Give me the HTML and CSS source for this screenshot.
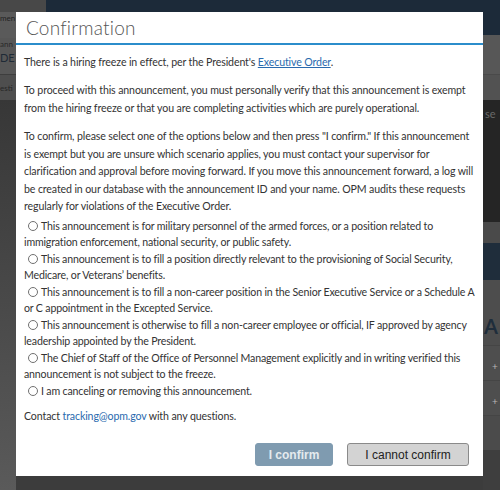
FILE: index.html
```html
<!DOCTYPE html>
<html>
<head>
<meta charset="utf-8">
<link rel="stylesheet" href="styles.css">
</head>
<body>
<div class="page">
  <div class="col-left">
    <div class="lb lb-top"></div>
    <div class="lb lb-1"><span class="lt">men</span></div>
    <div class="lb lb-2"><span class="lt small">ann</span><span class="lt big">DE</span></div>
    <div class="lb lb-3"><span class="lt">esti</span></div>
    <div class="lb lb-rest"></div>
  </div>
  <div class="col-mid">
    <div class="mid-top"><div class="mt-grey"></div><div class="mt-navy"></div></div>
  </div>
  <div class="col-right">
    <div class="rb rb-navy"></div>
    <div class="rb rb-g1"></div>
    <div class="rb rb-g2"></div>
    <div class="rb rb-dark"><span class="rt">se</span></div>
    <div class="rb rb-g3"></div>
    <div class="rb rb-blue"></div>
    <div class="rb rb-a"><span class="ra">A</span></div>
    <div class="rb rb-plus"><span class="rp">+</span></div>
    <div class="rb rb-plus"><span class="rp">+</span></div>
    <div class="rb rb-g4"></div>
    <div class="rb rb-bottom"></div>
  </div>
</div>

<div class="modal">
  <div class="modal-header">
    <h1 class="modal-title">Confirmation</h1>
  </div>
  <div class="modal-body">
    <p class="p1">There is a hiring freeze in effect, per the President's <a class="link-u" href="#">Executive Order</a>.</p>
    <p class="p2">To proceed with this announcement, you must personally verify that this announcement is exempt from the hiring freeze or that you are completing activities which are purely operational.</p>
    <p class="p3">To confirm, please select one of the options below and then press "I confirm." If this announcement is exempt but you are unsure which scenario applies, you must contact your supervisor for clarification and approval before moving forward. If you move this announcement forward, a log will be created in our database with the announcement ID and your name. OPM audits these requests regularly for violations of the Executive Order.</p>
    <div class="options">
      <div class="opt"><input type="radio" name="o" class="radio">This announcement is for military personnel of the armed forces, or a position related to immigration enforcement, national security, or public safety.</div>
      <div class="opt"><input type="radio" name="o" class="radio">This announcement is to fill a position directly relevant to the provisioning of Social Security, Medicare, or Veterans’ benefits.</div>
      <div class="opt"><input type="radio" name="o" class="radio">This announcement is to fill a non-career position in the Senior Executive Service or a Schedule A or C appointment in the Excepted Service.</div>
      <div class="opt"><input type="radio" name="o" class="radio">This announcement is otherwise to fill a non-career employee or official, IF approved by agency leadership appointed by the President.</div>
      <div class="opt"><input type="radio" name="o" class="radio">The Chief of Staff of the Office of Personnel Management explicitly and in writing verified this announcement is not subject to the freeze.</div>
      <div class="opt"><input type="radio" name="o" class="radio">I am canceling or removing this announcement.</div>
    </div>
    <p class="contact">Contact <a class="link" href="#">tracking@opm.gov</a> with any questions.</p>
  </div>
  <div class="modal-footer">
    <button class="btn btn-confirm">I confirm</button>
    <button class="btn btn-cancel">I cannot confirm</button>
  </div>
</div>
</body>
</html>
```
FILE: styles.css
```css
* { box-sizing: border-box; }
html, body { margin: 0; padding: 0; }
body {
  width: 500px;
  height: 490px;
  overflow: hidden;
  position: relative;
  background: #3c3c3c;
  font-family: Lato, "Liberation Sans", sans-serif;
}

/* backdrop page */
.page { display: flex; height: 490px; }
.col-left { width: 16px; display: flex; flex-direction: column; overflow: hidden; }
.col-mid { flex: 1; display: flex; flex-direction: column; }
.col-right { width: 17px; display: flex; flex-direction: column; overflow: hidden; }

.lb { position: relative; }
.lb-top { height: 12px; background: #484848; }
.lb-1 { height: 26px; background: #5a5a5a; }
.lb-2 { height: 37px; background: #575757; border-bottom: 1px solid #3e3e3e; }
.lb-3 { height: 25px; background: #4e4e4e; }
.lb-rest { flex: 1; background: linear-gradient(#373737, #5a5a5a); }
.lt { display: block; color: #222; font-size: 8px; line-height: 12px; white-space: nowrap; }
.lb-2 .lt.small { color: #2a2a2a; }
.lb-2 .lt.big { font-size: 11px; line-height: 16px; color: #1e2a36; }
.lb-3 .lt { padding-top: 7px; color: #262626; }

.mid-top { display: flex; height: 35px; }
.mt-grey { width: 30px; height: 12px; background: #484848; }
.mt-navy { flex: 1; background: #1c2a39; }

.rb { position: relative; }
.rb-navy { height: 35px; background: #1c2a39; }
.rb-g1 { height: 40px; background: #575757; border-bottom: 1px solid #4a4a4a; }
.rb-g2 { height: 25px; background: #525252; }
.rb-dark { height: 122px; background: #252525; }
.rb-g3 { height: 21px; background: #4a4a4a; }
.rb-blue { height: 37px; background: #1f2d3b; }
.rb-a { height: 65px; background: #4d4d4d; }
.rb-plus { height: 35px; background: #4e4e4e; border-top: 1px solid #454545; }
.rb-g4 { height: 35px; background: #4b4b4b; border-top: 1px solid #454545; }
.rb-bottom { flex: 1; background: #3e3e3e; }
.rt { display: block; margin: 7px 0 0 2px; color: #6a6a6a; font-size: 11px; }
.ra { display: block; margin: 33px 0 0 1px; color: #1f2d3b; font-size: 20px; font-weight: 700; line-height: 26px; }
.rp { display: block; margin: 14px 0 0 9px; color: #b5b5b5; font-size: 10px; line-height: 12px; }

/* modal */
.modal {
  position: absolute;
  left: 16px;
  top: 12px;
  width: 467px;
  height: 464px;
  background: #fff;
  display: flex;
  flex-direction: column;
}
.modal-header {
  height: 33px;
  border-bottom: 2px solid #2b8dcb;
  padding: 0 10px;
}
.modal-title {
  margin: 0;
  font-family: Lato, sans-serif;
  font-weight: 300;
  font-size: 19px;
  line-height: 32px;
  color: #555;
  letter-spacing: 0.2px;
}
.modal-body {
  padding: 9px 8px 0 8px;
  font-size: 10.6px;
  letter-spacing: -0.12px;
  color: #333;
}
.modal-body p { margin: 0; line-height: 17.5px; }
.p2 { margin-top: 10.5px !important; }
.p3 { margin-top: 11px !important; }
.options { margin-top: 2px; letter-spacing: -0.16px; }
.opt { line-height: 16.5px; }
.radio {
  -webkit-appearance: none;
  appearance: none;
  width: 10px;
  height: 10px;
  margin: 0 3px 0 4px;
  border: 1px solid #707070;
  border-radius: 50%;
  background: #fff;
  vertical-align: -1px;
}
.contact { margin-top: 9px !important; }
.link-u { color: #2a6aae; text-decoration: underline; }
.link { color: #2a6aae; text-decoration: none; }

.modal-footer {
  margin-top: auto;
  display: flex;
  justify-content: flex-end;
  gap: 14px;
  padding: 0 14px 10px 0;
}
.btn {
  height: 23px;
  font-family: "Liberation Sans", Arial, sans-serif;
  font-size: 12px;
  border-radius: 3px;
  padding: 0;
}
.btn-confirm {
  width: 78px;
  background: #7f9bb0;
  border: 1px solid #7f9bb0;
  color: #e4eaee;
  font-weight: 700;
}
.btn-cancel {
  width: 122px;
  background: #d3d3d3;
  border: 1px solid #8a8a8a;
  color: #222;
}
```
